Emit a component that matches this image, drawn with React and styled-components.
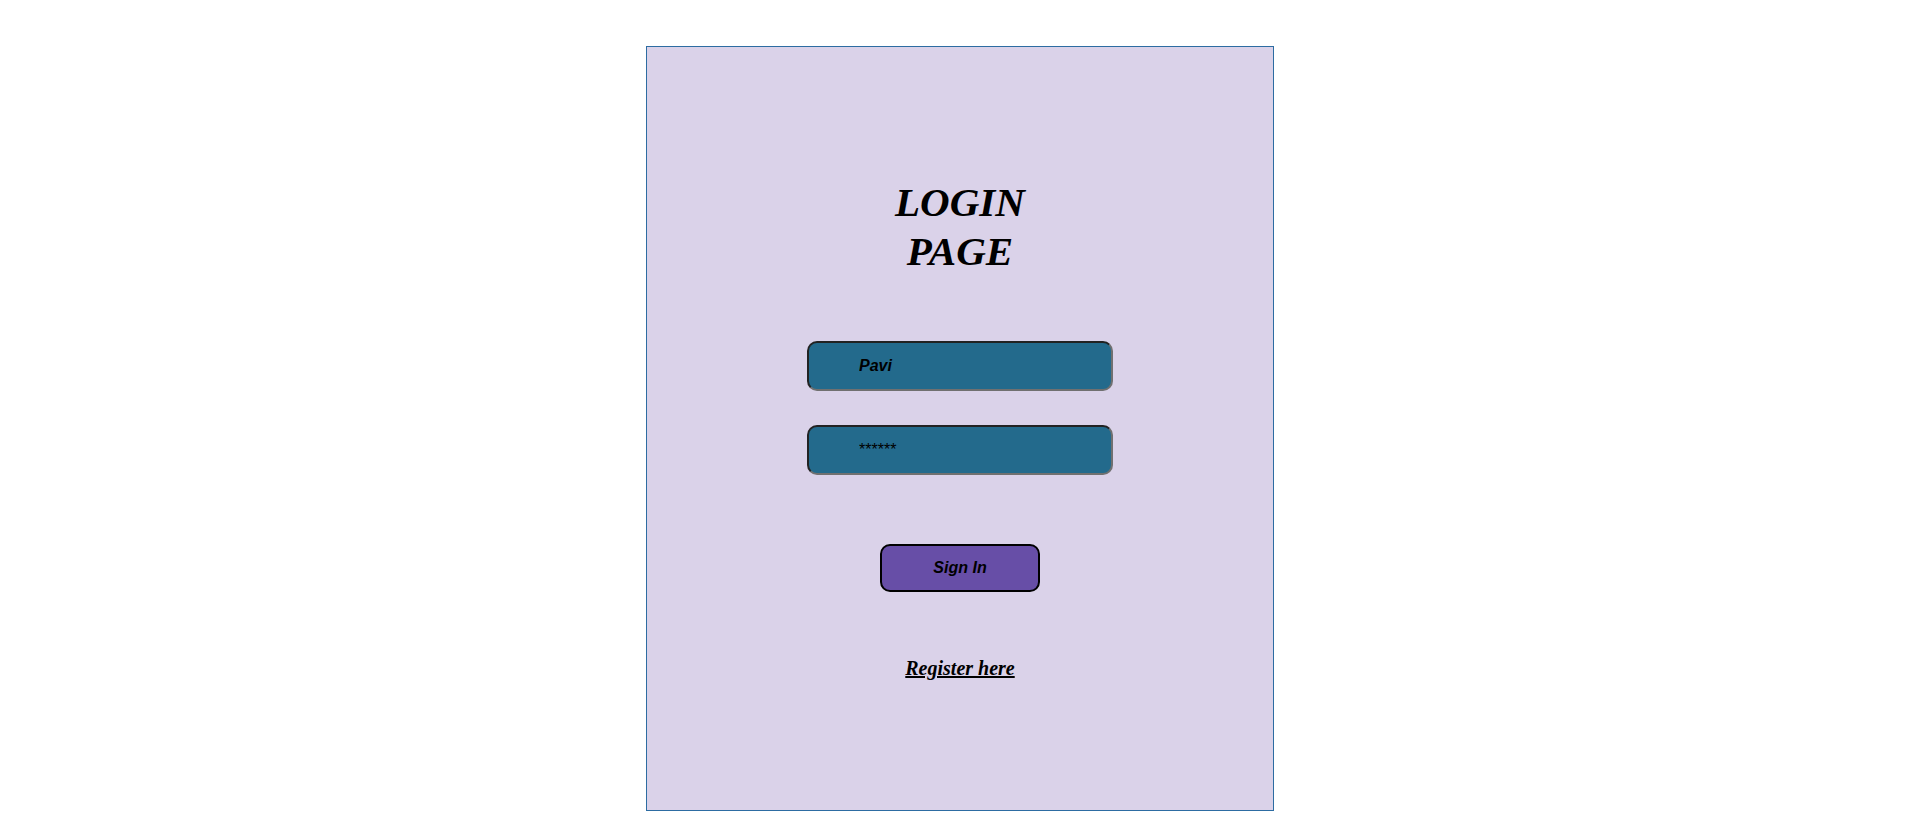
import styled, { createGlobalStyle } from "styled-components";

const GlobalStyle = createGlobalStyle`
  body {
    margin: 0;
    background: #fff;
    font-family: "Liberation Serif", "Times New Roman", serif;
  }
`;

const Page = styled.div`
  display: flex;
  justify-content: center;
  padding: 46px 0 0 9px;
`;

const Card = styled.form`
  box-sizing: border-box;
  width: 628px;
  height: 765px;
  background-color: #dad2e9;
  border: 1px solid #2d6ca2;
  display: flex;
  flex-direction: column;
  align-items: center;
  padding-top: 131px;
`;

const Title = styled.h1`
  width: 160px;
  margin: 0;
  font-family: "Liberation Serif", "Times New Roman", serif;
  font-size: 41px;
  line-height: 49px;
  font-style: italic;
  font-weight: bold;
  text-align: center;
  color: #000;
`;

const Fields = styled.div`
  display: flex;
  flex-direction: column;
  gap: 34px;
  margin-top: 65px;
`;

const Field = styled.input`
  box-sizing: border-box;
  width: 306px;
  height: 50px;
  padding: 0 0 0 50px;
  background-color: #236a8c;
  border: 2px solid;
  border-color: #222 #707070 #707070 #222;
  border-radius: 10px;
  font-family: "Liberation Sans", Arial, sans-serif;
  font-size: 16px;
  font-style: ${(p) => (p.$plain ? "normal" : "italic")};
  font-weight: ${(p) => (p.$plain ? "normal" : "bold")};
  color: #000;
  outline: none;
`;

const SignIn = styled.button`
  box-sizing: border-box;
  width: 160px;
  height: 48px;
  margin-top: 69px;
  background-color: #674ea7;
  border: 2px solid #000;
  border-radius: 10px;
  font-family: "Liberation Sans", Arial, sans-serif;
  font-size: 16px;
  font-style: italic;
  font-weight: bold;
  color: #000;
  cursor: pointer;
`;

const RegisterLink = styled.a`
  margin-top: 65px;
  font-family: "Liberation Serif", "Times New Roman", serif;
  font-size: 20px;
  font-style: italic;
  font-weight: bold;
  color: #000;
  text-decoration: underline;
`;

export default function App() {
  return (
    <>
      <GlobalStyle />
      <Page>
        <Card onSubmit={(e) => e.preventDefault()}>
          <Title>LOGIN PAGE</Title>
          <Fields>
            <Field type="text" defaultValue="Pavi" />
            <Field type="text" defaultValue="******" $plain />
          </Fields>
          <SignIn type="submit">Sign In</SignIn>
          <RegisterLink href="#register">Register here</RegisterLink>
        </Card>
      </Page>
    </>
  );
}
